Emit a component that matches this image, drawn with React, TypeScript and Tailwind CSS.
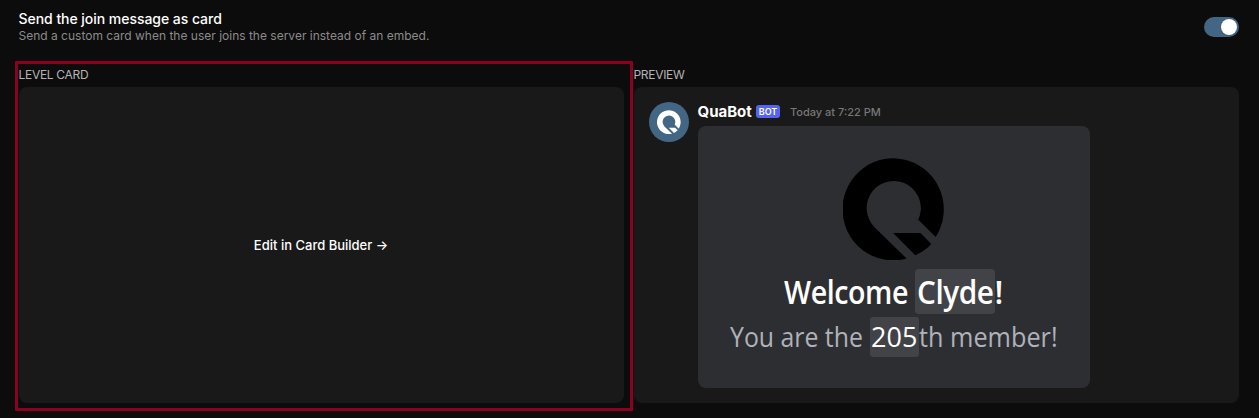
function QuaLogo({ className }: { className: string }) {
  return (
    <svg viewBox="38 23 305 307" className={className} fill="currentColor" aria-hidden="true">
      <path d="M315 262A151.500 152.500 0 1 0 228 326L133 233A81 81 0 1 1 263 210Z" />
      <path d="M188 250H270L302 283Q281 306 254 316Z" />
    </svg>
  );
}

function Toggle() {
  return (
    <button
      role="switch"
      aria-checked="true"
      className="mt-[17px] flex h-5 w-[35px] shrink-0 items-center justify-end rounded-full bg-[#436685] pr-[2px]"
    >
      <span className="size-4 rounded-full bg-white shadow" />
    </button>
  );
}

function WelcomeCard() {
  return (
    <div className="flex h-[262px] w-[392px] flex-col items-center rounded-lg bg-[#2d2e32] pt-[31px] font-['Open_Sans',sans-serif] whitespace-pre">
      <QuaLogo className="h-[103px] w-[102px] shrink-0 text-black" />
      <div className="mt-[9px] mr-[2px] flex h-[45px] items-center text-[32px] leading-[45px] font-semibold text-white">
        <span className="w-[131px]">
          <span className="inline-block origin-left scale-x-[0.895] tracking-[-0.5px]">Welcome</span>
        </span>
        <span className="h-[45px] w-20 rounded bg-[#424347] pl-[2px]">
          <span className="inline-block origin-left scale-x-[0.93] tracking-[-0.5px]">Clyde</span>
        </span>
        <span className="w-2">!</span>
      </div>
      <div className="mt-[3px] flex h-10 items-center text-[27px] leading-10 font-normal text-[#afb2b9]">
        <span className="w-[140px]">
          <span className="inline-block origin-left scale-x-[0.92]">You are the</span>
        </span>
        <span className="h-10 w-[49px] rounded-[3px] bg-[#424347] pl-px text-white">
          <span className="inline-block origin-left">205</span>
        </span>
        <span className="w-[139px]">
          <span className="inline-block origin-left scale-x-[0.935]">th member!</span>
        </span>
      </div>
    </div>
  );
}

export default function App() {
  return (
    <main className="relative h-[418px] w-[1259px] overflow-hidden bg-[#0c0c0c] font-[Inter,sans-serif] text-white">
      <header className="flex h-[66px] justify-between pr-5 pl-[18.5px]">
        <div className="pt-[10px]">
          <h2 className="text-[14px] leading-[18px] font-medium tracking-[-0.04px]">Send the join message as card</h2>
          <p className="text-[12px] leading-4 text-[#8b8b8b]">
            Send a custom card when the user joins the server instead of an embed.
          </p>
        </div>
        <Toggle />
      </header>
      <div className="grid grid-cols-2 gap-[10px] pr-5 pl-[19px]">
        <section>
          <h3 className="-ml-[0.5px] h-[21px] text-[12px] leading-[18px] tracking-[-0.3px] text-[#b3b3b3]">LEVEL CARD</h3>
          <div className="flex h-[316px] items-center justify-center rounded-lg bg-[#191919] pt-[2px] pr-px text-[13px] font-medium">
            Edit in Card Builder -&gt;
          </div>
        </section>
        <section>
          <h3 className="-ml-[0.5px] h-[21px] text-[12px] leading-[18px] tracking-[-0.3px] text-[#b3b3b3]">PREVIEW</h3>
          <div className="flex h-[316px] gap-[9px] rounded-lg bg-[#191919] pt-[15px] pl-[15px]">
            <div className="flex size-10 shrink-0 items-center justify-center rounded-full bg-[#436685]">
              <QuaLogo className="size-6 text-white" />
            </div>
            <div>
              <div className="flex h-6 items-start whitespace-nowrap">
                <span className="-ml-[0.5px] w-[58.5px] text-[15px] leading-5 font-bold">QuaBot</span>
                <span className="mt-[3px] flex h-[13px] w-6 items-center justify-center rounded-[3px] bg-[#5664f1] text-[9px] font-semibold">
                  BOT
                </span>
                <span className="ml-[10px] text-[11px] leading-5 font-medium text-[#777777]">
                  Today at 7:22 PM
                </span>
              </div>
              <WelcomeCard />
            </div>
          </div>
        </section>
      </div>
      <div className="pointer-events-none absolute top-[61px] left-[15px] h-[350px] w-[618px] rounded-[1px] border-[3px] border-[#8e0020]" />
    </main>
  );
}
